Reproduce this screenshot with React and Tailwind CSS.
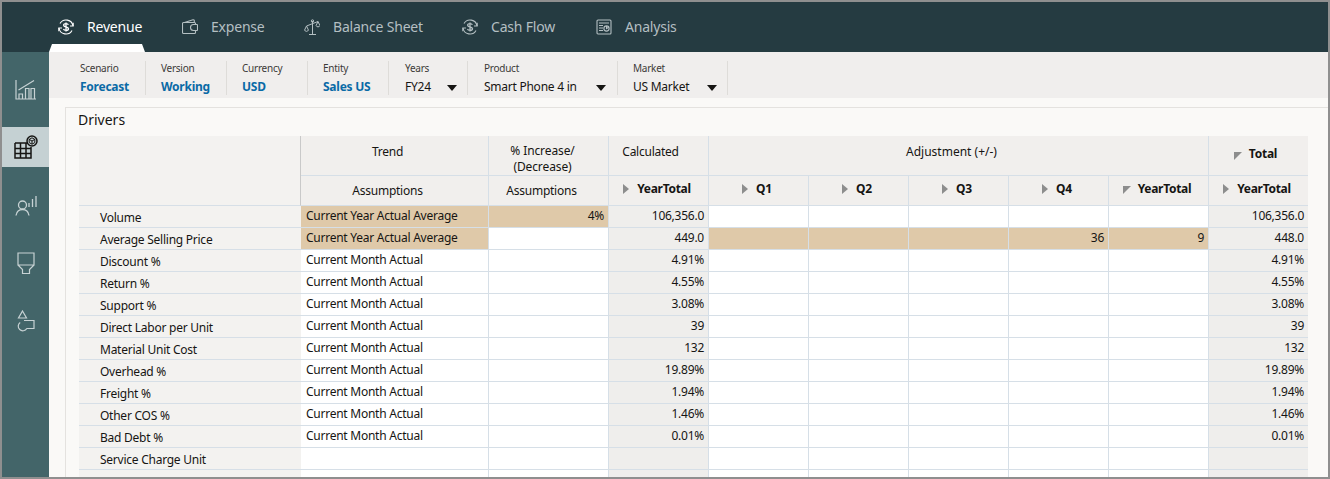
const ink = "#161513";

const Cycle = ({ className }) => (
  <svg className={className} viewBox="0 0 16 16" fill="none" stroke="currentColor" strokeWidth="1.1">
    <path d="M15 7A7 7 0 0 0 2 4.500M1 9a7 7 0 0 0 13 2.500" />
    <path d="M15.200 3.800V7h-3.200M.8 12.200V9H4" />
    <path d="M10.400 5.800C10 5 9.200 4.600 8 4.600c-1.400 0-2.400.7-2.400 1.700 0 2.400 4.900 1 4.900 3.400 0 1-1.100 1.700-2.500 1.700-1.200 0-2.200-.5-2.600-1.400M8 3.400v9.200" strokeWidth="1.300" />
  </svg>
);

const Wallet = ({ className }) => (
  <svg className={className} viewBox="0 0 16 16" fill="none" stroke="currentColor" strokeWidth="1.1">
    <path d="M13.500 11.500v2a1 1 0 0 1-1 1H1.500a1 1 0 0 1-1-1V4.500a1 1 0 0 1 1-1h11a1 1 0 0 1 1 1v1" />
    <path d="M2.500 3.500l8.500-2.700a1 1 0 0 1 1.300 1v1.700" />
    <path d="M15.500 5.500h-4a3 3 0 0 0 0 6h4" />
    <path d="M15.500 5.500v6" />
  </svg>
);

const Scale = ({ className }) => (
  <svg className={className} viewBox="0 0 16 16" fill="none" stroke="currentColor" strokeWidth="1">
    <path d="M5 15.500h7M8.500 15.500V2M2.500 7L14 2.500" />
    <path d="M2.500 7L.6 11a2 2 0 0 0 3.800 0zM14 2.500l-1.900 4a2 2 0 0 0 3.800 0z" />
    <circle cx="8.500" cy="2" r="1.200" />
  </svg>
);

const Report = ({ className }) => (
  <svg className={className} viewBox="0 0 16 16" fill="none" stroke="currentColor" strokeWidth="1.100">
    <rect x="1" y="1" width="14" height="14" rx="1" />
    <path d="M3 4h10M3 6.500h4M3 9h4M3 11.500h4" />
    <circle cx="10.500" cy="9.500" r="2.600" />
    <path d="M10.500 6.900v2.600l2.300-1.200" />
  </svg>
);

const ChartIcon = () => (
  <svg className="h-[21px] w-[21px] text-[#c7d2d4]" viewBox="0 0 21 21" fill="none" stroke="currentColor" strokeWidth="1.200">
    <path d="M1 1v19h20M3.500 11L19 1.500" />
    <path d="M4 20v-5h3.500v5M10.500 20V9.500h3.500V20M16 20V9.500h3.500V20" />
  </svg>
);

const GridCubeIcon = () => (
  <svg className="h-[24px] w-[24px] text-[#161513]" viewBox="0 0 24 24" fill="none" stroke="currentColor" strokeWidth="1.500">
    <path d="M1 8h13M1 13.500h16M1 18.500h16M1 8v15h16V12M6.500 8v15M12 8v15" />
    <circle cx="18" cy="6" r="5" />
    <path d="M18 2.800l2.800 1.600v3.200L18 9.200l-2.800-1.600V4.400zM15.200 4.400L18 6l2.800-1.600M18 6v3.200" strokeWidth="1" />
  </svg>
);

const PersonBarsIcon = () => (
  <svg className="h-[21px] w-[22px] text-[#c7d2d4]" viewBox="0 0 22 21" fill="none" stroke="currentColor" strokeWidth="1.300">
    <circle cx="7.500" cy="10" r="4" />
    <path d="M1 20.500c.6-3.600 3-6 6.500-6s5.900 2.400 6.500 6" />
    <path d="M14 12V8M17.500 12V4M21 12V1" />
  </svg>
);

const BucketIcon = () => (
  <svg className="h-[22px] w-[18px] text-[#c7d2d4]" viewBox="0 0 18 22" fill="none" stroke="currentColor" strokeWidth="1.200">
    <path d="M1 1h16v12H1zM1 13l4.500 4.500v4h7v-4L17 13" />
  </svg>
);

const ShapesIcon = () => (
  <svg className="h-[22px] w-[19px] text-[#c7d2d4]" viewBox="0 0 19 22" fill="none" stroke="currentColor" strokeWidth="1.200">
    <path d="M6.500 1l4 7h-8z" />
    <path d="M8 10.500h10v8h-7.500" />
    <path d="M10.800 18.500A4.600 4.600 0 1 1 4.200 12.400" />
  </svg>
);

const DropArrow = () => (
  <svg className="h-[6px] w-[10px] text-[#161513]" viewBox="0 0 10 6" fill="currentColor">
    <path d="M0 0h10L5 6z" />
  </svg>
);

const Collapsed = () => (
  <svg className="mr-[8px] h-[10px] w-[6px] text-[#8d8d8d]" viewBox="0 0 6 10" fill="currentColor">
    <path d="M0 0l6 5-6 5z" />
  </svg>
);

const Expanded = () => (
  <svg className="mr-[7px] mt-[2px] h-[8px] w-[8px] text-[#8d8d8d]" viewBox="0 0 8 8" fill="currentColor">
    <path d="M0 0h8L0 8z" />
  </svg>
);

const tabs = [
  { label: "Revenue", Icon: Cycle, width: "w-[124px]", active: true },
  { label: "Expense", Icon: Wallet, width: "w-[122px]" },
  { label: "Balance Sheet", Icon: Scale, width: "w-[158px]" },
  { label: "Cash Flow", Icon: Cycle, width: "w-[134px]" },
  { label: "Analysis", Icon: Report, width: "w-[100px]" },
];

const pov = [
  { label: "Scenario", value: "Forecast", width: "w-[81px] pl-[15px]" },
  { label: "Version", value: "Working", width: "w-[81px] pl-[15px]" },
  { label: "Currency", value: "USD", width: "w-[81px] pl-[15px]" },
  { label: "Entity", value: "Sales US", width: "w-[81px] pl-[15px]" },
  { label: "Years", value: "FY24", width: "w-[79px] pl-[16px]", drop: "right-[10px]" },
  { label: "Product", value: "Smart Phone 4 in", width: "w-[150px] pl-[16px]", drop: "right-[11px]" },
  { label: "Market", value: "US Market", width: "w-[110px] pl-[15px]", drop: "right-[10px]" },
];

const sideIcons = [ChartIcon, GridCubeIcon, PersonBarsIcon, BucketIcon, ShapesIcon];

const rows = [
  { label: "Volume", trend: "Current Year Actual Average", pct: "4%", calc: "106,356.0", total: "106,356.0", tanTrend: true, tanPct: true },
  { label: "Average Selling Price", trend: "Current Year Actual Average", calc: "449.0", q4: "36", yt: "9", total: "448.0", tanTrend: true, tanAdj: true },
  { label: "Discount %", trend: "Current Month Actual", calc: "4.91%", total: "4.91%" },
  { label: "Return %", trend: "Current Month Actual", calc: "4.55%", total: "4.55%" },
  { label: "Support %", trend: "Current Month Actual", calc: "3.08%", total: "3.08%" },
  { label: "Direct Labor per Unit", trend: "Current Month Actual", calc: "39", total: "39" },
  { label: "Material Unit Cost", trend: "Current Month Actual", calc: "132", total: "132" },
  { label: "Overhead %", trend: "Current Month Actual", calc: "19.89%", total: "19.89%" },
  { label: "Freight %", trend: "Current Month Actual", calc: "1.94%", total: "1.94%" },
  { label: "Other COS %", trend: "Current Month Actual", calc: "1.46%", total: "1.46%" },
  { label: "Bad Debt %", trend: "Current Month Actual", calc: "0.01%", total: "0.01%" },
  { label: "Service Charge Unit" },
  { label: "" },
];

const line = "border-r border-b border-[#d6dfe7]";
const lineEnd = "border-b border-[#d6dfe7]";
const head = "flex bg-[#f1efed] text-[12px]";
const headCell = `${head} ${line}`;
const num = "flex h-[22px] items-start justify-end pr-[4px] pt-[1px] leading-[17px]";

function Cell({ tan, grey, end, children }) {
  const bg = tan ? "bg-[#dfc9a9]" : grey ? "bg-[#efeeec]" : "bg-white";
  return <div className={`${num} ${bg} ${end ? lineEnd : line}`}>{children}</div>;
}

function BoldHead({ children, Marker = Collapsed, end }) {
  return (
    <div className={`${head} ${end ? lineEnd : line} items-start justify-center pr-[3px] pt-[5px]`}>
      <span className="mt-[3px]"><Marker /></span>
      <span className="text-[12px] leading-[16px] font-bold tracking-[-0.3px]">{children}</span>
    </div>
  );
}

export default function App() {
  return (
    <div
      className="flex h-[479px] w-[1330px] flex-col overflow-hidden border-2 border-[#8f8f8f] bg-[#faf9f7] text-[12px] tracking-[-0.25px]"
      style={{ fontFamily: '"Noto Sans", "Open Sans", sans-serif', color: ink }}
    >
      <header className="flex h-[50px] shrink-0 bg-[#253b41] pl-[47px]">
        {tabs.map(({ label, Icon, width, active }) => (
          <div key={label} className={`relative flex h-full items-start gap-[13px] pl-[9px] pt-[17px] ${width}`}>
            <Icon className={`h-[16px] w-[16px] shrink-0 ${active ? "text-white" : "text-[#b4bfc2]"}`} />
            <span className={`-mt-[1px] text-[14px] leading-[18px] tracking-[-0.2px] ${active ? "text-white" : "text-[#b4bfc2]"}`}>{label}</span>
            {active && <div className="absolute bottom-0 left-0 h-[8px] w-[96px] bg-white [clip-path:polygon(0_100%,3px_0,calc(100%-3px)_0,100%_100%)]" />}
          </div>
        ))}
      </header>

      <div className="flex min-h-0 flex-1">
        <aside className="flex w-[47px] shrink-0 flex-col gap-[18px] bg-[#436569] pt-[17px]">
          {sideIcons.map((Icon, i) => (
            <div key={i} className={`flex h-[40px] items-center justify-center ${i === 1 ? "bg-[#c5d1d3]" : ""}`}>
              <Icon />
            </div>
          ))}
        </aside>

        <main className="flex min-w-0 flex-1 flex-col">
          <div className="flex h-[46px] shrink-0 items-start bg-[#f0eeed] pl-[16px] pt-[9px]">
            {pov.map((p) => (
              <div key={p.label} className={`relative h-[34px] shrink-0 border-r border-[#dedcd9] ${p.width}`}>
                <div className="text-[10px] leading-[14px] text-[#3c3a38]">{p.label}</div>
                <div className={`mt-[3px] text-[12px] leading-[18px] ${p.drop ? "" : "font-bold text-[#0a6aa6]"}`}>
                  {p.value}
                </div>
                {p.drop && (
                  <span className={`absolute top-[24px] flex ${p.drop}`}>
                    <DropArrow />
                  </span>
                )}
              </div>
            ))}
          </div>

          <section className="ml-[16px] mt-[9px] min-h-0 flex-1 overflow-hidden border-l border-t border-[#e4e2df] pl-[13px]">
            <h2 className="-ml-[1px] mb-[7px] mt-[3px] text-[14px] leading-[18px] tracking-normal">Drivers</h2>
            <div className="grid grid-cols-[222px_188px_120px_repeat(6,100px)_99px] grid-rows-[40px_30px_repeat(13,22px)]">
              <div className="row-span-2 border-r border-b border-r-[#c9c9c9] border-b-[#d6dfe7] bg-[#f3f2f0]" />
              <div className={`${headCell} justify-center pr-[14px] pt-[7px]`}>Trend</div>
              <div className={`${headCell} justify-center pr-[12px] pt-[7px] text-center leading-[16px] tracking-[-0.1px]`}>% Increase/<br />(Decrease)</div>
              <div className={`${headCell} justify-center pr-[16px] pt-[7px]`}>Calculated</div>
              <div className={`${headCell} col-span-5 justify-center pr-[14px] pt-[7px] tracking-normal`}>Adjustment (+/-)</div>
              <div className={`${head} ${lineEnd} items-start justify-center pr-[6px] pt-[10px]`}>
                <span className="mt-[4px]"><Expanded /></span>
                <span className="leading-[16px] font-bold">Total</span>
              </div>

              <div className={`${headCell} items-center justify-center pr-[14px]`}>Assumptions</div>
              <div className={`${headCell} items-center justify-center pr-[14px]`}>Assumptions</div>
              <BoldHead>YearTotal</BoldHead>
              <BoldHead>Q1</BoldHead>
              <BoldHead>Q2</BoldHead>
              <BoldHead>Q3</BoldHead>
              <BoldHead>Q4</BoldHead>
              <BoldHead Marker={Expanded}>YearTotal</BoldHead>
              <BoldHead end>YearTotal</BoldHead>

              {rows.map((r, i) => (
                <div key={i} className="contents">
                  <div className="h-[22px] border-b border-[#d6dfe7] bg-[#f3f2f0] pl-[21px] pt-[3px] leading-[17px]">{r.label}</div>
                  <div className={`h-[22px] pl-[5px] pt-[1px] leading-[17px] ${r.tanTrend ? "bg-[#dfc9a9]" : "bg-white"} ${line}`}>{r.trend}</div>
                  <Cell tan={r.tanPct}>{r.pct}</Cell>
                  <Cell grey>{r.calc}</Cell>
                  <Cell tan={r.tanAdj} />
                  <Cell tan={r.tanAdj} />
                  <Cell tan={r.tanAdj} />
                  <Cell tan={r.tanAdj}>{r.q4}</Cell>
                  <Cell tan={r.tanAdj}>{r.yt}</Cell>
                  <Cell grey end>{r.total}</Cell>
                </div>
              ))}
            </div>
          </section>
        </main>
      </div>
    </div>
  );
}
